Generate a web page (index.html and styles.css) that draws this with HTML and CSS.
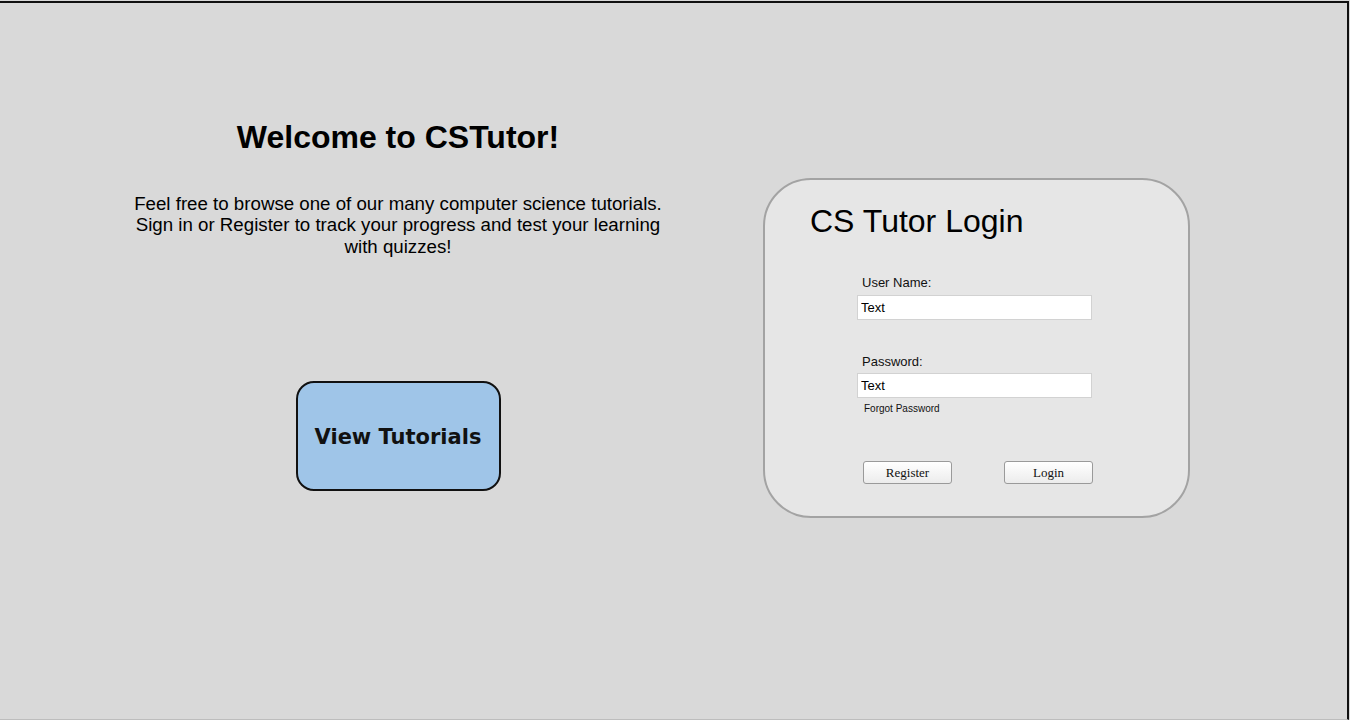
FILE: index.html
```html
<!DOCTYPE html>
<html lang="en">
<head>
<meta charset="utf-8">
<title>CSTutor</title>
<link rel="stylesheet" href="styles.css">
</head>
<body>
<div class="frame">
  <section class="intro">
    <h1 class="intro-title">Welcome to CSTutor!</h1>
    <p class="intro-text">Feel free to browse one of our many computer science tutorials. Sign in or Register to track your progress and test your learning with quizzes!</p>
    <button class="tutorials-btn" type="button">View Tutorials</button>
  </section>
  <section class="login-card">
    <h2 class="login-title">CS Tutor Login</h2>
    <form class="login-form">
      <label class="field-label" for="user">User Name:</label>
      <input class="field-input" id="user" type="text" value="Text">
      <label class="field-label second" for="pass">Password:</label>
      <input class="field-input" id="pass" type="text" value="Text">
      <a class="forgot" href="#">Forgot Password</a>
      <div class="actions">
        <button class="form-btn" type="button">Register</button>
        <button class="form-btn" type="button">Login</button>
      </div>
    </form>
  </section>
</div>
</body>
</html>
```
FILE: styles.css
```css
html, body {
  margin: 0;
  padding: 0;
  background: #d9d9d9;
}
body {
  font-family: "Liberation Sans", Arial, sans-serif;
  color: #000;
  overflow: hidden;
}
.frame {
  box-sizing: border-box;
  margin-top: 1px;
  width: 1349px;
  height: 719px;
  border-top: 2px solid #111;
  border-right: 2px solid #111;
  border-bottom: 1px solid #bdbdbd;
  background: #d9d9d9;
  display: flex;
  align-items: flex-start;
}
.intro {
  width: 600px;
  margin-left: 98px;
  margin-top: 116px;
  display: flex;
  flex-direction: column;
  align-items: center;
  text-align: center;
}
.intro-title {
  margin: 0;
  font-size: 32px;
  line-height: 37px;
  font-weight: bold;
}
.intro-text {
  margin: 37px 0 0;
  font-size: 18.7px;
  line-height: 21.3px;
  width: 545px;
}
.tutorials-btn {
  margin-top: 124px;
  box-sizing: border-box;
  width: 205px;
  height: 110px;
  background: #9fc5e8;
  border: 2px solid #111;
  border-radius: 18px;
  font-family: "DejaVu Sans", sans-serif;
  font-weight: bold;
  font-size: 21px;
  color: #111;
  padding: 3px 0 0;
}
.login-card {
  box-sizing: border-box;
  margin-left: 65px;
  margin-top: 175px;
  width: 427px;
  height: 340px;
  background: #e6e6e6;
  border: 2px solid #a3a3a3;
  border-radius: 48px;
  padding: 23px 0 0 45px;
}
.login-title {
  margin: 0;
  font-size: 32px;
  line-height: 37px;
  font-weight: normal;
}
.login-form {
  margin: 35px 0 0 47px;
  width: 235px;
  display: flex;
  flex-direction: column;
  align-items: flex-start;
}
.field-label {
  font-size: 13px;
  line-height: 16px;
  margin-left: 5px;
  color: #111;
}
.field-label.second {
  margin-top: 34px;
}
.field-input {
  box-sizing: border-box;
  width: 235px;
  height: 25px;
  margin-top: 4px;
  border: 1px solid #d2d2d2;
  background: #fff;
  font-family: "Liberation Sans", Arial, sans-serif;
  font-size: 13px;
  color: #000;
  padding: 0 3px;
  outline: none;
}
.field-label.second + .field-input {
  margin-top: 3px;
}
.forgot {
  margin: 5px 0 0 7px;
  font-size: 10px;
  line-height: 12px;
  color: #111;
  text-decoration: none;
}
.actions {
  margin-top: 46px;
  margin-left: 6px;
  display: flex;
  gap: 52px;
}
.form-btn {
  box-sizing: border-box;
  width: 89px;
  height: 23px;
  border: 1px solid #9a9a9a;
  border-radius: 3px;
  background: linear-gradient(#ffffff, #ececec);
  font-family: "Liberation Serif", "Times New Roman", serif;
  font-size: 13px;
  color: #111;
  padding: 0;
}
```
